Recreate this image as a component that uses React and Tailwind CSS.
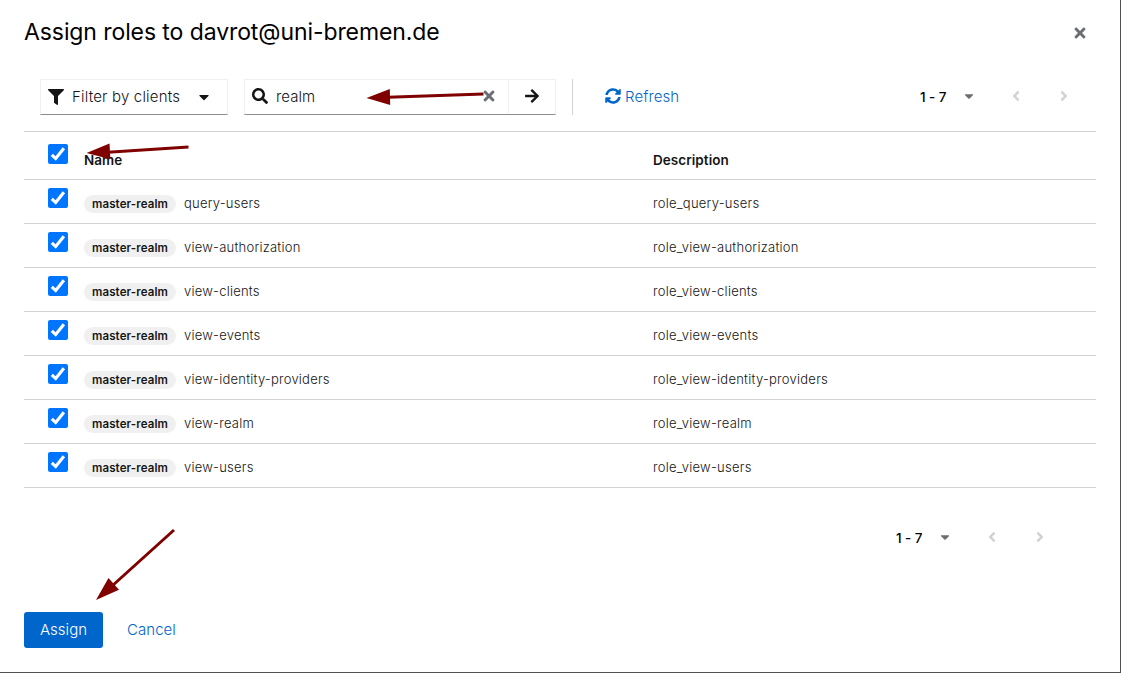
import React from "react";
import {
  FaAngleLeft,
  FaAngleRight,
  FaArrowRight,
  FaCaretDown,
  FaFilter,
  FaSearch,
  FaSyncAlt,
  FaTimes,
} from "react-icons/fa";

const roles = [
  "query-users",
  "view-authorization",
  "view-clients",
  "view-events",
  "view-identity-providers",
  "view-realm",
  "view-users",
];

function Checkbox() {
  return (
    <span
      role="checkbox"
      aria-checked="true"
      className="block size-5 shrink-0 rounded-[2px] bg-[#0075ff]"
    >
      <svg viewBox="0 0 20 20" className="size-5" fill="none" stroke="#fff" strokeWidth="3.1">
        <path d="M3.8 10.8 7.7 14.5 15.900 4.200" />
      </svg>
    </span>
  );
}

function Pagination() {
  return (
    <div className="flex h-9 items-center">
      <span className="w-[44px] pt-[3px] text-[13.5px] font-medium tracking-[-0.1px] text-black">
        1 - 7
      </span>
      <FaCaretDown className="-ml-[2px] size-[14px] text-[#6a6e73]" />
      <FaAngleLeft className="ml-[32px] size-4 text-[#d2d2d2]" />
      <FaAngleRight className="ml-8 size-4 text-[#d2d2d2]" />
    </div>
  );
}

function Arrows() {
  return (
    <svg
      className="pointer-events-none absolute inset-0"
      width="1121"
      height="673"
      fill="#800000"
      stroke="#800000"
    >
      <path d="M483.500 94 388 97.2M188.500 147 108 152.3M174 530 112 586" strokeWidth="3" />
      <path
        stroke="none"
        d="M366.500 98 389.800 89 390.200 105ZM86.500 153 109.500 143.500 110.400 159.300ZM96 600 108.500 578 119 589.800Z"
      />
    </svg>
  );
}

export default function App() {
  return (
    <div className="relative flex h-[673px] w-[1121px] flex-col border-r border-b border-[#4f5255] bg-white px-6 font-['Inter','Liberation_Sans',sans-serif] text-[#151515]">
      <header className="flex h-16 items-center justify-between pr-2">
        <h1 className="text-[23px] tracking-[-0.09px] text-black">
          Assign roles to davrot@uni-bremen.de
        </h1>
        <FaTimes className="mt-[2px] size-4 text-[#6a6e73]" />
      </header>

      <div className="flex h-[67px] items-start pt-[15px] pl-4">
        <button className="flex h-9 w-[188px] items-center border border-[#f0f0f0] border-b-[#8a8d90] px-[7px]">
          <FaFilter className="size-4" />
          <span className="ml-2 flex-1 pt-px text-left text-[15px] font-[350] tracking-[0.18px]">
            Filter by clients
          </span>
          <FaCaretDown className="mr-2 size-4" />
        </button>
        <div className="ml-4 flex h-9 w-[312px] border border-[#f0f0f0] border-b-[#8a8d90]">
          <div className="flex flex-1 items-center px-[7px]">
            <FaSearch className="mb-[2px] size-4" />
            <span className="ml-2 flex-1 pt-px text-[15px] font-[350] tracking-[0.1px]">realm</span>
            <FaTimes className="mr-1 mb-[2px] size-4 text-[#6a6e73]" />
          </div>
          <button className="flex w-[47px] items-center justify-center border-l border-[#f0f0f0]">
            <FaArrowRight className="mb-[2px] size-4" />
          </button>
        </div>
        <div className="ml-4 h-9 w-px bg-[#d2d2d2]" />
        <button className="ml-8 flex h-[35px] items-center gap-1 text-[15px] font-[350] tracking-[0.1px] text-[#0066cc]">
          <FaSyncAlt className="mb-px size-4" />
          <span className="pt-[2px]">Refresh</span>
        </button>
        <div className="-mt-px ml-auto pr-6">
          <Pagination />
        </div>
      </div>

      <div className="border-t border-[#d2d2d2] text-[13px] leading-5">
        <div className="flex h-12 items-start border-b border-[#d2d2d2] pt-3 pl-6 text-[13.5px] font-semibold">
          <Checkbox />
          <span className="mt-[6px] ml-4 w-[569px]">Name</span>
          <span className="mt-[6px] tracking-[0.05px]">Description</span>
        </div>
        {roles.map((role) => (
          <div key={role} className="flex h-11 items-start border-b border-[#d2d2d2] pt-2 pl-6">
            <Checkbox />
            <div className="mt-[5px] ml-4 flex w-[569px] items-start">
              <span className="mt-[2px] flex h-[18px] w-[92px] items-center justify-center rounded-full bg-[#f0f0f0] text-[11.5px] font-semibold tracking-[0.1px]">
                master-realm
              </span>
              <span className="ml-2 font-[350] tracking-[0.23px]">{role}</span>
            </div>
            <span className="mt-[5px] font-[350] tracking-[0.25px]">role_{role}</span>
          </div>
        ))}
      </div>

      <div className="mt-[31px] flex justify-end pr-12">
        <Pagination />
      </div>

      <footer className="mt-auto mb-6 flex h-9 items-center text-[15px] font-[350] tracking-[0.05px]">
        <button className="h-9 w-[79px] rounded-[3px] bg-[#0066cc] pt-px text-white">Assign</button>
        <button className="ml-6 pt-px text-[#0066cc]">Cancel</button>
      </footer>

      <Arrows />
    </div>
  );
}
